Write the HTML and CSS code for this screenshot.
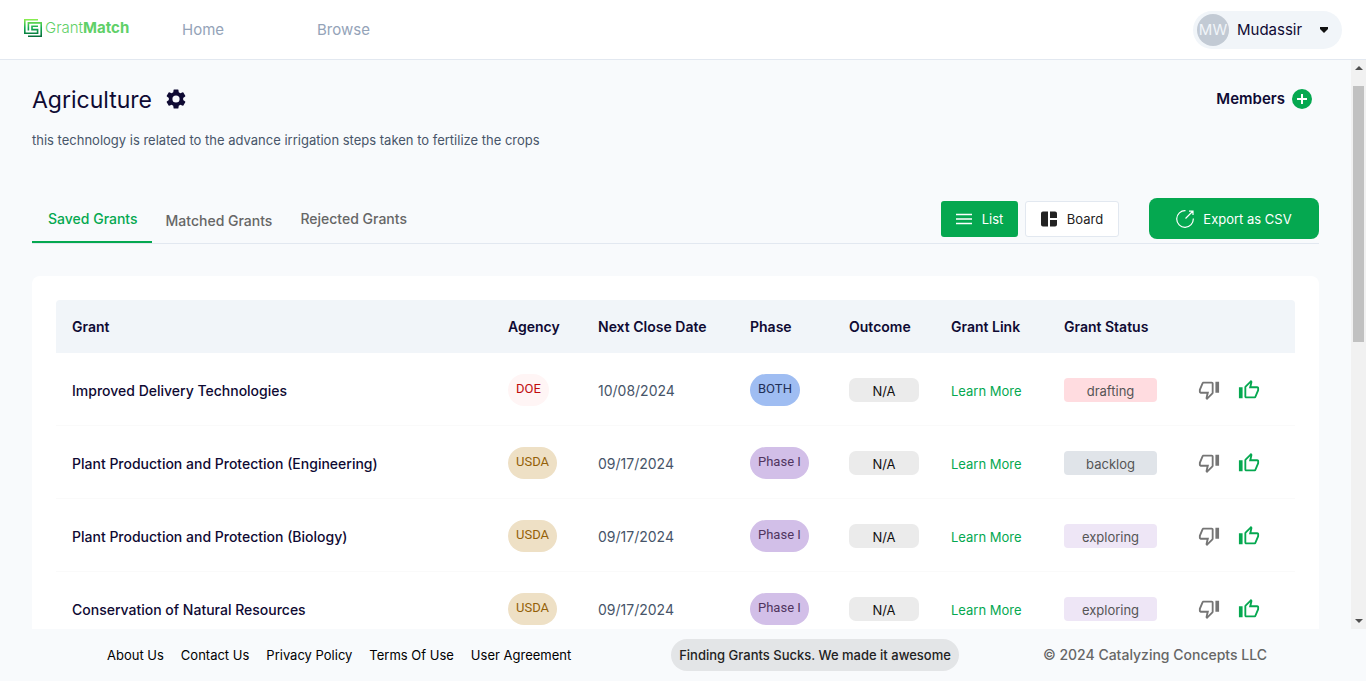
FILE: index.html
```html
<!DOCTYPE html>
<html lang="en">
<head>
<meta charset="utf-8">
<meta name="viewport" content="width=device-width, initial-scale=1">
<title>GrantMatch</title>
<link rel="stylesheet" href="styles.css">
</head>
<body>
<svg class="sprite" aria-hidden="true">
  <symbol id="down" viewBox="0 0 24 24"><path d="M15 3H6c-.83 0-1.54.5-1.84 1.22l-3.02 7.05c-.09.23-.14.47-.14.73v2c0 1.1.9 2 2 2h6.31l-.95 4.57-.03.32c0 .41.17.79.44 1.06L9.83 23l6.59-6.59c.36-.36.58-.86.58-1.41V5c0-1.1-.9-2-2-2zm0 12l-4.34 4.34L12 14H3v-2l3-7h9v10zm4-12h4v12h-4z"/></symbol>
  <symbol id="up" viewBox="0 0 24 24"><path d="M9 21h9c.83 0 1.54-.5 1.84-1.22l3.02-7.05c.09-.23.14-.47.14-.73v-2c0-1.1-.9-2-2-2h-6.31l.95-4.57.03-.32c0-.41-.17-.79-.44-1.06L14.17 1 7.58 7.59C7.22 7.95 7 8.45 7 9v10c0 1.1.9 2 2 2zM9 9l4.34-4.34L12 10h9v2l-3 7H9V9zM1 9h4v12H1z"/></symbol>
</svg>
<div class="app">
  <header class="topbar">
    <a class="brand" href="#">
      <svg class="brand-mark" viewBox="0 0 18 18" aria-hidden="true">
        <defs><linearGradient id="leaf" gradientUnits="userSpaceOnUse" x1="0" y1="0" x2="0" y2="18"><stop offset="0" stop-color="#8ef04f"/><stop offset=".5" stop-color="#10a950"/><stop offset="1" stop-color="#076b39"/></linearGradient></defs>
        <path fill="none" stroke="url(#leaf)" stroke-width="1.6" d="M14 .8H.8V14.2H13.6V10.6H8V7.200H14M4 17.200H17.200V3.900H4.400V11.400"/>
      </svg>
      <span class="brand-name">Grant<b>Match</b></span>
    </a>
    <nav class="nav"><a href="#">Home</a><a href="#">Browse</a></nav>
    <button class="user" type="button"><span class="avatar">MW</span><span>Mudassir</span>
      <svg class="caret" viewBox="0 0 8 6" aria-hidden="true"><path d="M0 0h8v2L4 6 0 2z"/></svg></button>
  </header>
  <div class="view">
    <main class="content">
      <div class="heading">
        <h1>Agriculture</h1>
        <button class="icon-btn" type="button" aria-label="Settings"><svg class="gear" viewBox="0 0 24 24"><path d="M19.14 12.94c.04-.3.06-.61.06-.94 0-.32-.02-.64-.07-.94l2.03-1.58a.49.49 0 0 0 .12-.61l-1.92-3.32a.49.49 0 0 0-.59-.22l-2.39.96c-.5-.38-1.03-.7-1.62-.94l-.36-2.54A.48.48 0 0 0 13.920 2.400h-3.840a.47.47 0 0 0-.47.410l-.36 2.540c-.59.24-1.130.57-1.620.94l-2.390-.96a.48.48 0 0 0-.59.22L2.740 8.870c-.12.21-.08.47.12.61l2.030 1.580c-.05.3-.09.63-.09.94s.02.64.07.94l-2.030 1.580a.49.49 0 0 0-.12.61l1.920 3.320c.12.22.37.29.59.22l2.390-.96c.5.38 1.030.7 1.620.94l.36 2.540c.05.24.24.41.48.41h3.840c.24 0 .44-.17.47-.41l.36-2.540c.59-.24 1.130-.56 1.620-.94l2.390.96c.22.08.47 0 .59-.22l1.920-3.320a.47.47 0 0 0-.12-.61l-2.010-1.580zM12 15.600a3.600 3.600 0 1 1 0-7.200 3.600 3.600 0 0 1 0 7.200z"/></svg></button>
        <div class="members"><span>Members</span><button class="add" type="button" aria-label="Add member"><svg viewBox="0 0 20 20"><circle cx="10" cy="10" r="10"/><path d="M10 5v10M5 10h10"/></svg></button></div>
      </div>
      <p class="lead">this technology is related to the advance irrigation steps taken to fertilize the crops</p>
      <div class="toolbar">
        <div class="tabs" role="tablist">
          <button class="tab active" type="button" role="tab" aria-selected="true">Saved Grants</button>
          <button class="tab matched" type="button" role="tab">Matched Grants</button>
          <button class="tab" type="button" role="tab">Rejected Grants</button>
        </div>
        <div class="actions">
          <button class="btn primary" type="button"><svg viewBox="0 0 16 16" aria-hidden="true"><path fill="none" stroke="currentColor" stroke-width="1.4" d="M0 3.500h16M0 8h16M0 12.500h16"/></svg>List</button>
          <button class="btn board" type="button"><svg viewBox="0 0 16 16" aria-hidden="true"><path fill="currentColor" d="M2 .5h5v15H2a2 2 0 0 1-2-2v-11a2 2 0 0 1 2-2zM9 .5h5a2 2 0 0 1 2 2V7H9zM9 9h7v4.500a2 2 0 0 1-2 2H9z"/></svg>Board</button>
          <button class="btn export" type="button"><svg viewBox="0 0 18 18" aria-hidden="true"><path fill="none" stroke="currentColor" stroke-width="1.200" d="M9.500.7A8.300 8.300 0 1 0 17.300 8.500M9.500 8.500L16.500 1.500M13 1.200h4V5"/></svg>Export as CSV</button>
        </div>
      </div>
      <section class="card">
        <table class="grants">
          <colgroup><col><col class="c-agency"><col class="c-date"><col class="c-phase"><col class="c-outcome"><col class="c-link"><col class="c-status"><col class="c-vote"></colgroup>
          <thead><tr><th>Grant</th><th>Agency</th><th>Next Close Date</th><th>Phase</th><th>Outcome</th><th>Grant Link</th><th>Grant Status</th><th></th></tr></thead>
          <tbody>
            <tr><td class="text name">Improved Delivery Technologies</td><td><span class="pill doe">DOE</span></td><td class="text">10/08/2024</td><td><span class="pill both">BOTH</span></td><td><span class="tag na">N/A</span></td><td class="text"><a href="#">Learn More</a></td><td><span class="tag drafting">drafting</span></td><td><div class="votes"><button type="button" aria-label="Reject"><svg class="down"><use href="#down"/></svg></button><button type="button" aria-label="Save"><svg class="up"><use href="#up"/></svg></button></div></td></tr>
            <tr><td class="text name">Plant Production and Protection (Engineering)</td><td><span class="pill usda">USDA</span></td><td class="text">09/17/2024</td><td><span class="pill one">Phase I</span></td><td><span class="tag na">N/A</span></td><td class="text"><a href="#">Learn More</a></td><td><span class="tag backlog">backlog</span></td><td><div class="votes"><button type="button" aria-label="Reject"><svg class="down"><use href="#down"/></svg></button><button type="button" aria-label="Save"><svg class="up"><use href="#up"/></svg></button></div></td></tr>
            <tr><td class="text name">Plant Production and Protection (Biology)</td><td><span class="pill usda">USDA</span></td><td class="text">09/17/2024</td><td><span class="pill one">Phase I</span></td><td><span class="tag na">N/A</span></td><td class="text"><a href="#">Learn More</a></td><td><span class="tag exploring">exploring</span></td><td><div class="votes"><button type="button" aria-label="Reject"><svg class="down"><use href="#down"/></svg></button><button type="button" aria-label="Save"><svg class="up"><use href="#up"/></svg></button></div></td></tr>
            <tr><td class="text name">Conservation of Natural Resources</td><td><span class="pill usda">USDA</span></td><td class="text">09/17/2024</td><td><span class="pill one">Phase I</span></td><td><span class="tag na">N/A</span></td><td class="text"><a href="#">Learn More</a></td><td><span class="tag exploring">exploring</span></td><td><div class="votes"><button type="button" aria-label="Reject"><svg class="down"><use href="#down"/></svg></button><button type="button" aria-label="Save"><svg class="up"><use href="#up"/></svg></button></div></td></tr>
          </tbody>
        </table>
      </section>
    </main>
    <div class="scrollbar" aria-hidden="true"><svg viewBox="0 0 8 4"><path d="M0 4L4 0l4 4z"/></svg><div class="track"><div class="thumb"></div></div><svg viewBox="0 0 8 4"><path d="M0 0h8L4 4z"/></svg></div>
  </div>
  <footer class="footer">
    <nav class="links"><a href="#">About Us</a><a href="#">Contact Us</a><a href="#">Privacy Policy</a><a href="#">Terms Of Use</a><a href="#">User Agreement</a></nav>
    <span class="slogan">Finding Grants Sucks. We made it awesome</span>
    <span class="copy">© 2024 Catalyzing Concepts LLC</span>
  </footer>
</div>
</body>
</html>
```
FILE: styles.css
```css
* { box-sizing: border-box; }
body { margin: 0; font-family: Inter, "Liberation Sans", sans-serif; font-size: 14px; line-height: 20px; color: #475569; background: #f8fafc; }
button { font: inherit; color: inherit; border: 0; background: none; padding: 0; cursor: pointer; }
a { color: inherit; text-decoration: none; }
.sprite { display: none; }
.app { height: 100vh; display: flex; flex-direction: column; }

.topbar { display: flex; align-items: center; height: 60px; flex: none; padding: 0 24px; background: #fff; border-bottom: 1px solid #e2e8f0; }
.brand { display: flex; align-items: center; gap: 3px; width: 158px; padding-bottom: 4px; }
.brand-mark { width: 18px; height: 18px; }
.brand-name { font-size: 15px; font-weight: 300; color: #5fd068; }
.brand-name b { font-weight: 700; }
.nav { display: flex; gap: 93px; font-size: 15px; color: #94a3b8; }
.user { display: flex; align-items: center; margin-left: auto; height: 38px; width: 149px; padding: 0 14px 0 4px; border-radius: 19px; background: #f1f5f9; color: #0f0a33; font-size: 15px; }
.avatar { width: 32px; height: 32px; margin-right: 8px; border-radius: 50%; background: #c2cad4; color: #f1f5f9; line-height: 32px; text-align: center; }
.caret { width: 8px; height: 6px; margin-left: auto; fill: #111; }

.view { display: flex; flex: 1; min-height: 0; overflow: hidden; }
.content { flex: 1; min-width: 0; padding: 24px 32px 0; }
.heading { display: flex; align-items: center; height: 32px; }
h1 { margin: 0 12px 0 0; font-size: 23px; font-weight: 400; line-height: 32px; color: #0f0a33; }
.icon-btn { display: flex; padding-bottom: 2px; }
.gear { width: 24px; height: 24px; fill: #0f0a33; }
.members { display: flex; align-items: center; gap: 7px; margin-left: auto; padding: 0 7px 2px 0; font-size: 15px; font-weight: 600; color: #0f0a33; }
.add { display: flex; }
.add svg { width: 20px; height: 20px; fill: #05a850; stroke: none; }
.add path { stroke: #fff; stroke-width: 2; }
.lead { margin: 14px 0 0; font-size: 13px; }

.toolbar { display: flex; justify-content: space-between; align-items: flex-end; height: 47px; margin-top: 47px; border-bottom: 1px solid #e2e8f0; }
.tabs { display: flex; align-items: flex-end; }
.tab { height: 46px; padding: 0 14px 2px; font-weight: 500; color: #666; }
.tab.active { padding: 0 14px 0 16px; color: #05a850; border-bottom: 2px solid #05a850; }
.tab.matched { padding-top: 2px; padding-bottom: 0; }
.actions { display: flex; align-items: center; gap: 7px; padding-bottom: 4px; }
.btn { display: flex; align-items: center; justify-content: center; gap: 10px; height: 36px; font-size: 13px; border-radius: 3px; }
.btn svg { width: 16px; height: 16px; }
.primary { width: 77px; background: #05a850; color: #fff; }
.board { width: 94px; border: 1px solid #e2e8f0; background: #fff; color: #222; }
.export { width: 170px; height: 41px; gap: 9px; margin-left: 23px; border-radius: 8px; background: #05a850; color: #fff; }
.export svg { width: 18px; height: 18px; }

.card { margin-top: 32px; padding: 24px; border-radius: 8px; background: #fff; }
.grants { width: 100%; table-layout: fixed; border-collapse: separate; border-spacing: 0; }
.c-agency { width: 90px; }
.c-date { width: 152px; }
.c-phase { width: 99px; }
.c-outcome { width: 102px; }
.c-link { width: 113px; }
.c-status { width: 125px; }
.c-vote { width: 122px; }
th { height: 53px; padding: 0 0 0 16px; text-align: left; font-weight: 600; color: #0f0a33; background: #f1f5f9; white-space: nowrap; }
th:first-child { border-radius: 4px 0 0; }
th:last-child { border-radius: 0 4px 0 0; }
td { height: 73px; padding: 2px 0 0 16px; border-bottom: 1px solid #fafafa; white-space: nowrap; }
td a { color: #05a850; font-size: 13px; }
.text { padding-top: 4px; }
.name { font-weight: 500; color: #0f0a33; }
.pill { display: inline-block; height: 32px; padding: 0 8px; border-radius: 16px; line-height: 30px; font-family: Roboto, sans-serif; font-size: 13px; vertical-align: middle; }
.doe { background: #fff5f5; color: #c00d0d; }
.usda { background: #eee0c5; color: #946008; }
.both { background: #9fbdf2; color: #1f3058; }
.one { background: #d2bfe8; color: #50355f; }
.tag { display: block; height: 24px; line-height: 26px; border-radius: 4px; text-align: center; font-size: 13px; color: #555; }
.na { width: 70px; border-radius: 7px; background: #ebebeb; color: #111; }
.drafting { width: 93px; background: #ffdce0; }
.backlog { width: 93px; background: #e0e4e9; }
.exploring { width: 93px; background: #eee6f6; }
.votes { display: flex; gap: 18px; padding-left: 9px; }
.votes button { display: flex; }
.votes svg { width: 22px; height: 22px; }
.down { fill: #757575; }
.up { fill: #05a850; }

.scrollbar { display: flex; flex-direction: column; align-items: center; width: 15px; padding: 6px 0; background: #f1f1f1; }
.scrollbar svg { width: 8px; height: 4px; fill: #505050; }
.track { flex: 1; padding-top: 16px; }
.thumb { width: 11px; height: 48%; background: #c1c1c1; }

.footer { display: flex; align-items: center; justify-content: space-between; height: 52px; flex: none; padding: 0 99px 0 107px; }
.links { display: flex; gap: 17px; font-size: 13px; color: #000; }
.slogan { margin-left: 16px; padding: 0 8px; border-radius: 16px; line-height: 32px; background: #e3e5e7; font-size: 13px; font-weight: 500; color: #222; }
.copy { font-weight: 500; color: #666; }
```
